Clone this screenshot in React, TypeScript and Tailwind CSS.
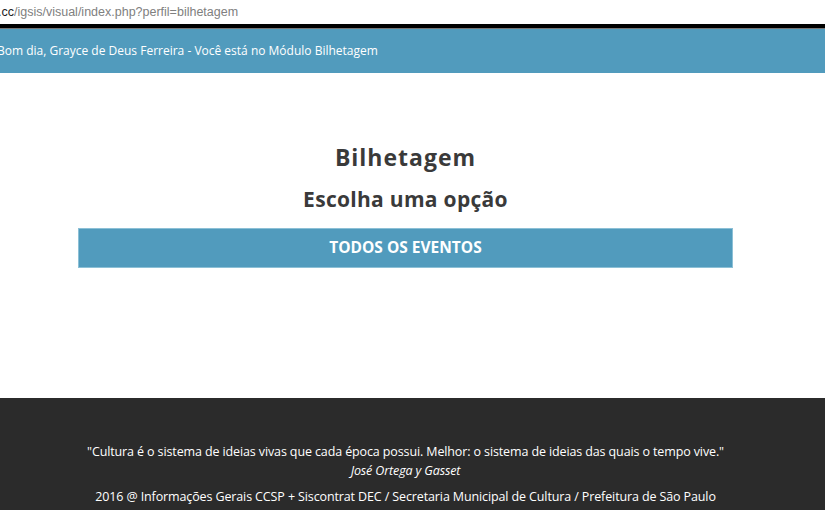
export default function App() {
  return (
    <div className="w-[825px] h-[510px] overflow-hidden bg-white flex flex-col" style={{ fontFamily: '"Open Sans", sans-serif' }}>
      {/* Address bar */}
      <div className="h-[24px] flex items-center bg-white shrink-0">
        <span className="text-[12.5px] leading-none text-[#808080] -ml-[2px] whitespace-nowrap" style={{ fontFamily: '"Liberation Sans", sans-serif' }}>
          <span className="text-[#222]">.cc</span>/igsis/visual/index.php?perfil=bilhetagem
        </span>
      </div>
      <div className="h-[4px] bg-black shrink-0" />
      <div className="h-[1px] bg-[#777] shrink-0" />

      {/* Greeting bar */}
      <div className="h-[44px] bg-[#519bbd] flex items-center shrink-0">
        <span className="text-white text-[12px] -ml-[3px] whitespace-nowrap">
          Bom dia, Grayce de Deus Ferreira - Você está no Módulo Bilhetagem
        </span>
      </div>

      {/* Main */}
      <div className="flex-1 w-[811px] flex flex-col items-center pt-[73px]">
        <h1 className="text-[23px] font-bold text-[#3a3a3a] leading-none tracking-[1px]">Bilhetagem</h1>
        <h2 className="text-[21px] font-bold text-[#3a3a3a] leading-none mt-[20px] tracking-[0.3px]">Escolha uma opção</h2>
        <button className="mt-[18px] w-[655px] h-[40px] bg-[#519bbd] border border-[#8cc0d6] text-white font-bold text-[15.5px] flex items-center justify-center">
          TODOS OS EVENTOS
        </button>
      </div>

      {/* Footer */}
      <div className="h-[112px] bg-[#2b2b2b] shrink-0">
        <div className="w-[811px] flex flex-col items-center pt-[48px] text-white text-[12.5px] leading-none tracking-[-0.12px]">
          <p>"Cultura é o sistema de ideias vivas que cada época possui. Melhor: o sistema de ideias das quais o tempo vive."</p>
          <p className="italic mt-[6px]">José Ortega y Gasset</p>
          <p className="mt-[14px]">2016 @ Informações Gerais CCSP + Siscontrat DEC / Secretaria Municipal de Cultura / Prefeitura de São Paulo</p>
        </div>
      </div>
    </div>
  );
}
